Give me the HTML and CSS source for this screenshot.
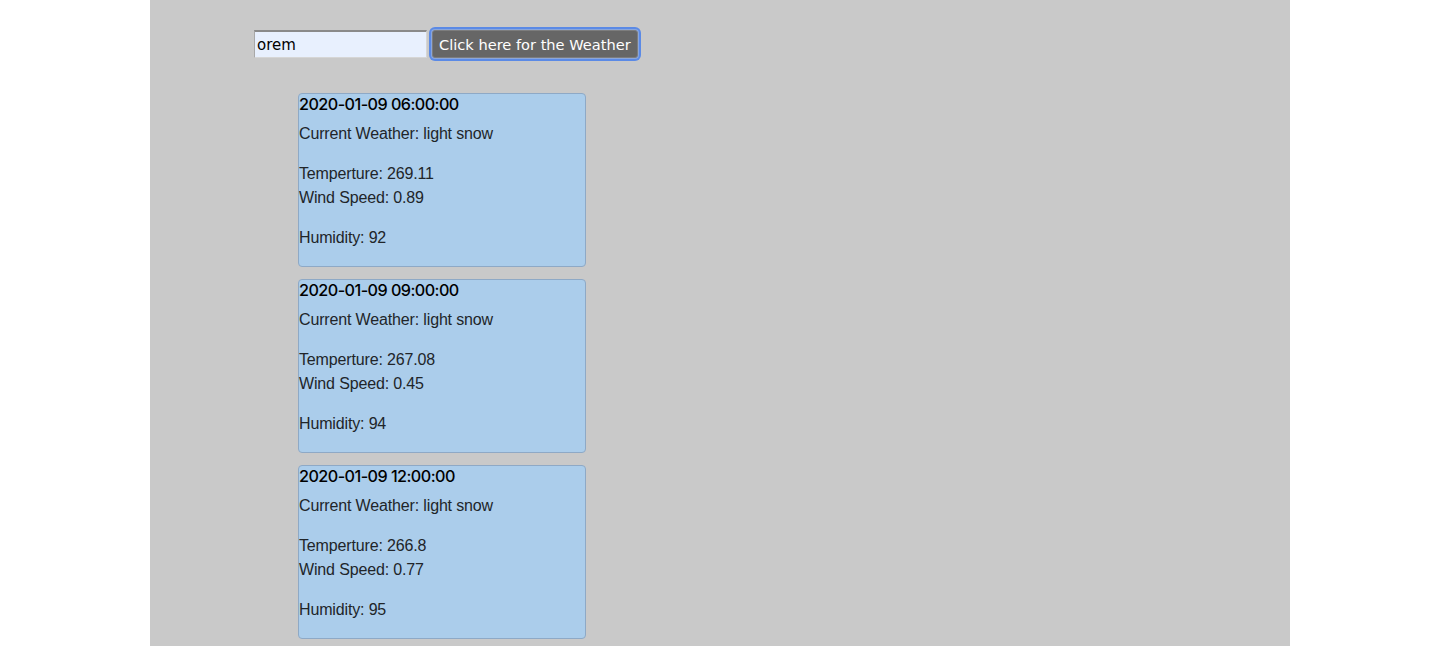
FILE: index.html
```html
<!DOCTYPE html>
<html>
<head>
<meta charset="utf-8">
<link rel="stylesheet" href="styles.css">
</head>
<body>
<div class="container">
  <div class="search">
    <input class="city" type="text" value="orem">
    <button class="go">Click here for the Weather</button>
  </div>
  <div class="cards">
    <div class="card">
      <h5 class="date">2020-01-09 06:00:00</h5>
      <p>Current Weather: light snow</p>
      <p>Temperture: 269.11<br>Wind Speed: 0.89</p>
      <p>Humidity: 92</p>
    </div>
    <div class="card">
      <h5 class="date">2020-01-09 09:00:00</h5>
      <p>Current Weather: light snow</p>
      <p>Temperture: 267.08<br>Wind Speed: 0.45</p>
      <p>Humidity: 94</p>
    </div>
    <div class="card">
      <h5 class="date">2020-01-09 12:00:00</h5>
      <p>Current Weather: light snow</p>
      <p>Temperture: 266.8<br>Wind Speed: 0.77</p>
      <p>Humidity: 95</p>
    </div>
  </div>
</div>
</body>
</html>
```
FILE: styles.css
```css
html, body {
  margin: 0;
  padding: 0;
  background: #ffffff;
}
body {
  font-family: "Liberation Sans", Arial, sans-serif;
  font-size: 16px;
  line-height: 24px;
  color: #212529;
}
.container {
  width: 1140px;
  margin-left: 150px;
  min-height: 646px;
  background: #c9c9c9;
  box-sizing: border-box;
  padding-top: 30px;
}
.search {
  display: flex;
  align-items: center;
  padding-left: 104px;
  gap: 2px;
}
.city {
  width: 173px;
  height: 28px;
  box-sizing: border-box;
  margin: 0;
  padding: 0 2px;
  background: #e8f0fe;
  border: 1px solid #d6d6d6;
  border-top: 2px solid #8a8a8a;
  border-left: 1px solid #a8a8a8;
  font-family: "DejaVu Sans", Verdana, sans-serif;
  font-size: 15px;
  color: #000;
  outline: none;
}
.go {
  margin: 0 0 0 3px;
  height: 28px;
  box-sizing: border-box;
  background: #666666;
  color: #ffffff;
  border: 1px solid #7d7d7d;
  border-radius: 3px;
  box-shadow: 0 0 0 1px #8aa6dc, 0 0 0 3px #5b8ae6;
  padding: 0 6px;
  font-family: "DejaVu Sans", Verdana, sans-serif;
  font-size: 14.6px;
  cursor: pointer;
}
.cards {
  display: flex;
  flex-direction: column;
  gap: 12px;
  padding-left: 148px;
  margin-top: 35px;
}
.card {
  width: 288px;
  box-sizing: border-box;
  background: #abcdeb;
  border: 1px solid #8ea9c6;
  border-radius: 4px;
}
.date {
  margin: 0 0 8px 0;
  font-family: Inter, "Liberation Sans", sans-serif;
  font-size: 16.2px;
  line-height: 20px;
  font-weight: 500;
  letter-spacing: -0.55px;
  color: #000;
}
.card p {
  margin: 0 0 16px 0;
  letter-spacing: -0.15px;
}
```
